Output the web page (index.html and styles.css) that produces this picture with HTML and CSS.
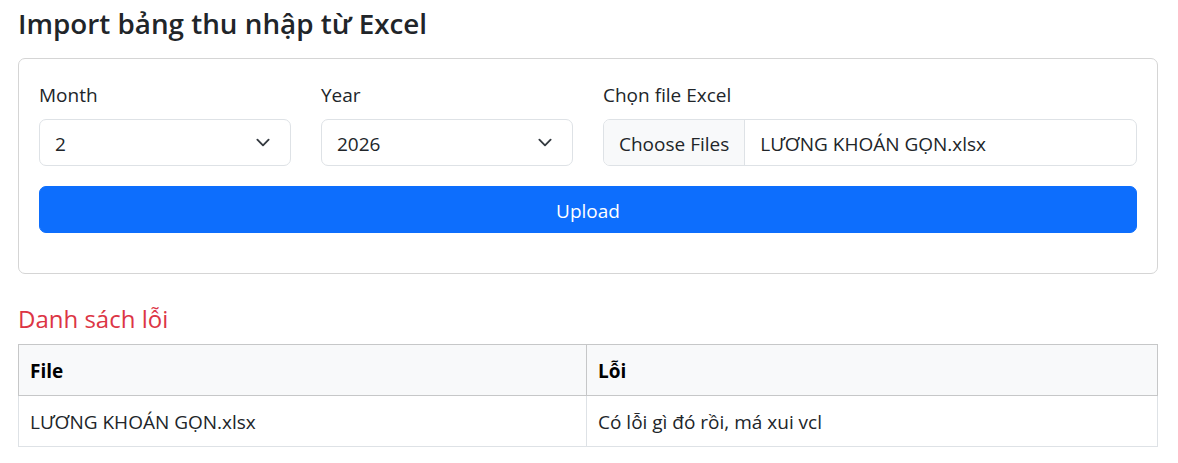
FILE: index.html
```html
<!DOCTYPE html>
<html lang="vi">
<head>
<meta charset="utf-8">
<title>Import bảng thu nhập từ Excel</title>
<link rel="stylesheet" href="styles.css">
</head>
<body>
<main class="page">
  <h1 class="page-title">Import bảng thu nhập từ Excel</h1>

  <form class="card">
    <div class="form-row">
      <div class="field">
        <label class="field-label">Month</label>
        <div class="select">
          <span class="select-value">2</span>
          <svg class="chevron" viewBox="0 0 16 16" width="20" height="15" aria-hidden="true"><path d="m2 5 6 6 6-6" fill="none" stroke="#343a40" stroke-width="2" stroke-linecap="round" stroke-linejoin="round"/></svg>
        </div>
      </div>
      <div class="field">
        <label class="field-label">Year</label>
        <div class="select">
          <span class="select-value">2026</span>
          <svg class="chevron" viewBox="0 0 16 16" width="20" height="15" aria-hidden="true"><path d="m2 5 6 6 6-6" fill="none" stroke="#343a40" stroke-width="2" stroke-linecap="round" stroke-linejoin="round"/></svg>
        </div>
      </div>
      <div class="field">
        <label class="field-label">Chọn file Excel</label>
        <div class="file-input">
          <span class="file-button">Choose Files</span>
          <span class="file-name">LƯƠNG KHOÁN GỌN.xlsx</span>
        </div>
      </div>
    </div>
    <button type="button" class="btn-upload">Upload</button>
  </form>

  <h2 class="error-title">Danh sách lỗi</h2>
  <table class="error-table">
    <thead>
      <tr><th class="col-file">File</th><th>Lỗi</th></tr>
    </thead>
    <tbody>
      <tr><td>LƯƠNG KHOÁN GỌN.xlsx</td><td>Có lỗi gì đó rồi, má xui vcl</td></tr>
    </tbody>
  </table>
</main>
</body>
</html>
```

FILE: styles.css
```css
* { box-sizing: border-box; }

html, body {
  margin: 0;
  padding: 0;
  background: #fff;
}

body {
  font-family: "Open Sans", "Noto Sans", "DejaVu Sans", sans-serif;
  font-size: 19px;
  line-height: 30px;
  color: #212529;
}

.page {
  padding: 6px 20px 0 18px;
}

.page-title {
  margin: 0 0 17px;
  font-size: 27.8px;
  line-height: 35px;
  font-weight: 600;
  color: #212529;
}

.card {
  margin: 0;
  border: 1px solid #d5d5d5;
  border-radius: 7px;
  padding: 20px 20px 40px;
}

.form-row {
  display: grid;
  grid-template-columns: 252px 252px 1fr;
  column-gap: 30px;
  margin-bottom: 20px;
}

.field-label {
  display: block;
  margin: 0 0 10px;
  padding-top: 1px;
  height: 30px;
  line-height: 30px;
}

.select {
  height: 47px;
  border: 1px solid #dee2e6;
  border-radius: 7px;
  padding: 2px 15px 0;
  display: flex;
  align-items: center;
  justify-content: space-between;
  background: #fff;
}

.select-value {
  line-height: 30px;
}

.chevron {
  display: block;
  margin-right: 2px;
  margin-top: -2px;
}

.file-input {
  height: 47px;
  border: 1px solid #dee2e6;
  border-radius: 7px;
  display: flex;
  align-items: stretch;
  overflow: hidden;
}

.file-button {
  flex: 0 0 140px;
  display: flex;
  align-items: center;
  padding: 2px 15px 0;
  background: #f8f9fa;
  border-right: 1px solid #dee2e6;
  white-space: nowrap;
}

.file-name {
  display: flex;
  align-items: center;
  padding: 2px 15px 0;
  white-space: nowrap;
}

.btn-upload {
  display: block;
  width: 100%;
  height: 47px;
  margin: 0;
  border: 1px solid #0d6efd;
  border-radius: 7px;
  background: #0d6efd;
  color: #fff;
  font-family: inherit;
  font-size: 19px;
  line-height: 30px;
  padding: 2px 0 0;
}

.error-title {
  margin: 30px 0 10px;
  font-size: 24px;
  line-height: 30px;
  font-weight: 500;
  color: #dc3545;
}

.error-table {
  width: 100%;
  border-collapse: collapse;
}

.error-table th,
.error-table td {
  text-align: left;
  padding: 11px 11px 9px;
  line-height: 30px;
  vertical-align: top;
}

.error-table th {
  background: #f8f9fa;
  border: 1px solid #c6c7c8;
  font-weight: 700;
  color: #000;
}

.error-table td {
  border: 1px solid #dee2e6;
  color: #212529;
}

.col-file {
  width: 568px;
}
```
